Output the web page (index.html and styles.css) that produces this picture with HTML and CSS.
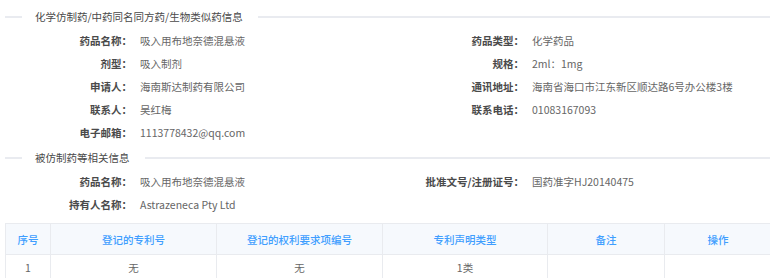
FILE: index.html
```html
<!DOCTYPE html>
<html lang="zh">
<head>
<meta charset="utf-8">
<link rel="stylesheet" href="styles.css">
</head>
<body>
<div class="page">
  <div class="divider first"><span class="line short"></span><span class="dtext">化学仿制药/中药同名同方药/生物类似药信息</span><span class="line long"></span></div>
  <div class="info rows1">
    <div class="lbl">药品名称：</div><div class="val">吸入用布地奈德混悬液</div>
    <div class="lbl">药品类型：</div><div class="val">化学药品</div>
    <div class="lbl">剂型：</div><div class="val">吸入制剂</div>
    <div class="lbl">规格：</div><div class="val">2ml：1mg</div>
    <div class="lbl">申请人：</div><div class="val">海南斯达制药有限公司</div>
    <div class="lbl">通讯地址：</div><div class="val">海南省海口市江东新区顺达路6号办公楼3楼</div>
    <div class="lbl">联系人：</div><div class="val">吴红梅</div>
    <div class="lbl">联系电话：</div><div class="val">01083167093</div>
    <div class="lbl">电子邮箱：</div><div class="val">1113778432@qq.com</div>
  </div>
  <div class="divider second"><span class="line short"></span><span class="dtext">被仿制药等相关信息</span><span class="line long"></span></div>
  <div class="info rows2">
    <div class="lbl">药品名称：</div><div class="val">吸入用布地奈德混悬液</div>
    <div class="lbl">批准文号/注册证号：</div><div class="val">国药准字HJ20140475</div>
    <div class="lbl">持有人名称：</div><div class="val">Astrazeneca Pty Ltd</div>
  </div>
  <table class="grid">
    <colgroup>
      <col class="c1"><col class="c2"><col class="c3"><col class="c4"><col class="c5"><col class="c6">
    </colgroup>
    <thead>
      <tr><th>序号</th><th>登记的专利号</th><th>登记的权利要求项编号</th><th>专利声明类型</th><th>备注</th><th>操作</th></tr>
    </thead>
    <tbody>
      <tr><td>1</td><td>无</td><td>无</td><td>1类</td><td></td><td></td></tr>
    </tbody>
  </table>
</div>
</body>
</html>
```

FILE: styles.css
```css
html, body {
  margin: 0;
  padding: 0;
  background: #ffffff;
}
body {
  font-family: "Microsoft YaHei", "Noto Sans CJK SC", "Noto Sans", sans-serif;
  font-size: 10.5px;
  color: #333;
  width: 770px;
  height: 278px;
  overflow: hidden;
}
.page {
  padding-top: 9px;
}
.divider {
  display: flex;
  align-items: center;
  height: 16px;
  padding-left: 5px;
}
.divider.second {
  margin-top: 6px;
}
.line {
  height: 2px;
  background: #e9ebf0;
}
.line.short {
  width: 17px;
  margin-right: 13px;
}
.line.long {
  flex: 1;
  margin-left: 15px;
}
.dtext {
  color: #4a4a4a;
  white-space: nowrap;
  line-height: 16px;
}
.info {
  display: grid;
  grid-template-columns: 132px 260px 132px 1fr;
  grid-auto-rows: 23px;
  align-items: center;
}
.rows1 {
  margin-top: 4px;
}
.rows2 {
  margin-top: 4px;
}
.lbl {
  text-align: right;
  font-weight: 600;
  color: #4a4a4a;
  white-space: nowrap;
}
.val {
  padding-left: 8px;
  color: #666;
  white-space: nowrap;
}
.grid {
  margin-top: 7px;
  margin-left: 5px;
  width: 766px;
  border-collapse: collapse;
  table-layout: fixed;
}
.c1 { width: 45px; }
.c2 { width: 166px; }
.c3 { width: 166px; }
.c4 { width: 165px; }
.c5 { width: 117px; }
.c6 { width: 107px; }
.grid th, .grid td {
  border: 1px solid #e9ebef;
  text-align: center;
  padding: 0;
  white-space: nowrap;
}
.grid th {
  height: 30px;
  background: #f6f9fd;
  color: #409eff;
  font-weight: 500;
}
.grid td {
  height: 24px;
  color: #666;
}
```
